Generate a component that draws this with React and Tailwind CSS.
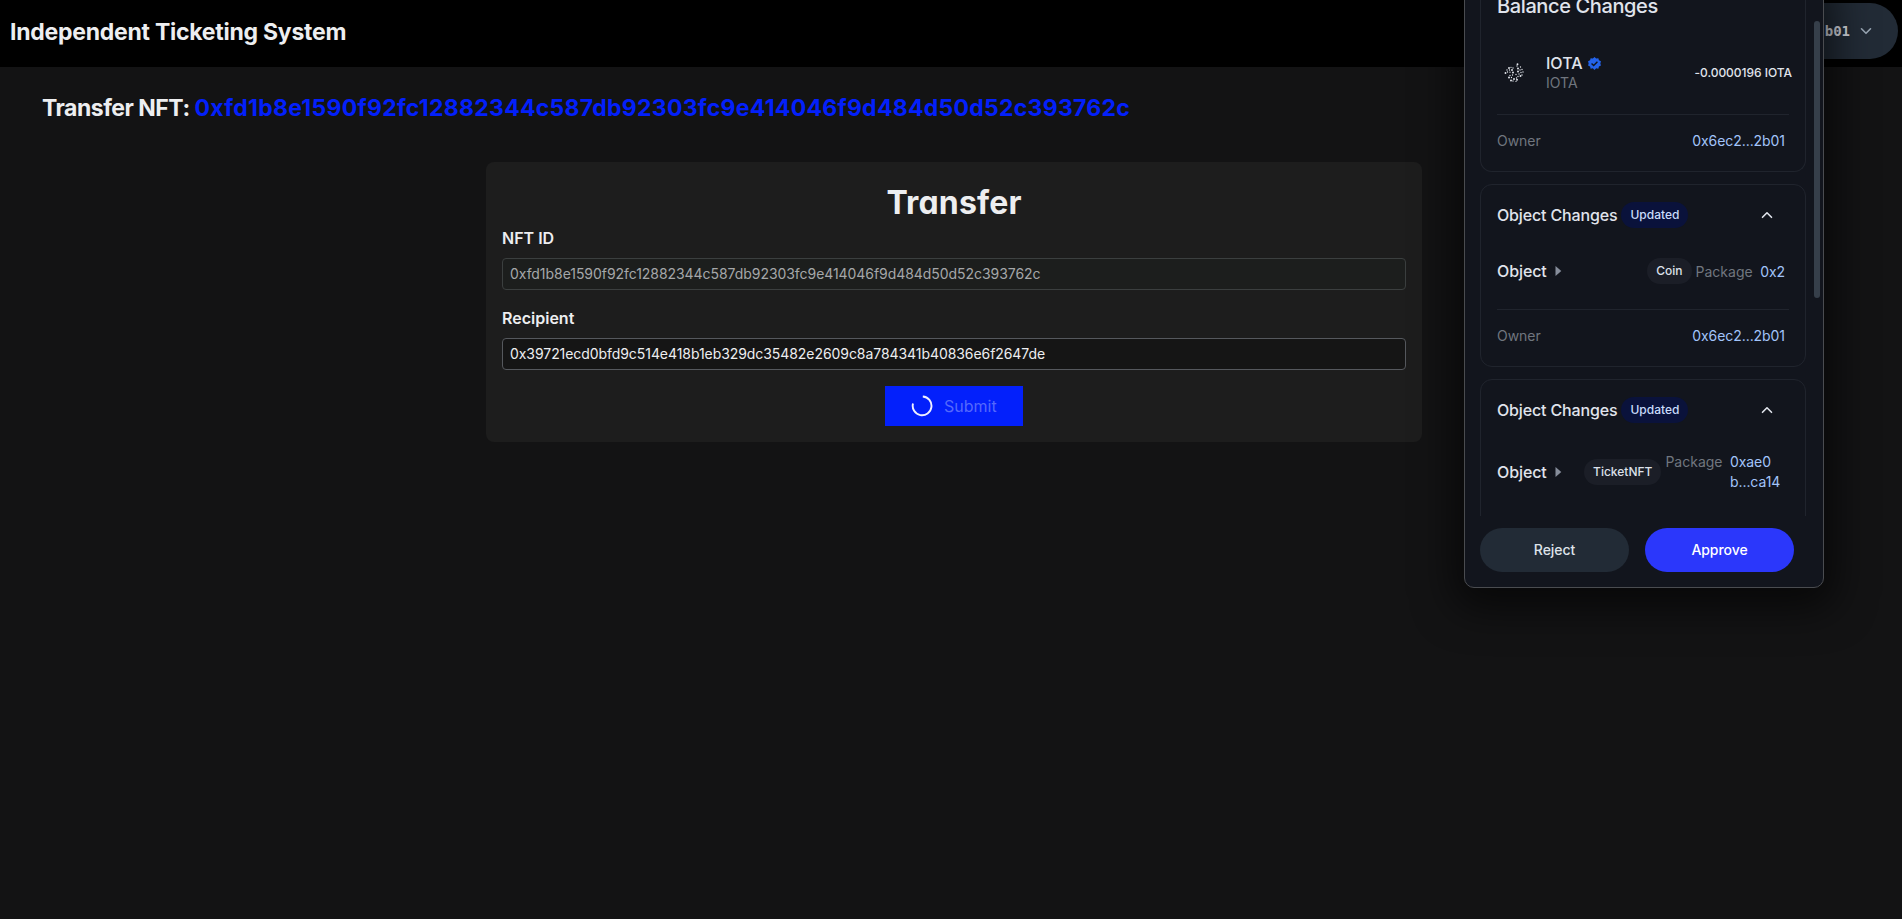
import React from "react";

const DOTS = [
  [13.5, 1.2], [13, 3], [16.5, 4], [5, 5], [7, 4.3], [9, 5], [14, 5.5], [3, 7], [5.5, 7], [8, 7], [16, 7], [18, 6.5],
  [1.5, 10], [3.5, 9], [6, 9.2], [14, 8.5], [17, 9.5], [19, 9], [9, 9.5], [12, 11.5], [15, 11], [16.5, 13], [18, 12],
  [6, 12.5], [5, 14.5], [7.5, 14.5], [8.5, 12], [10, 16], [12.5, 15], [14, 13.5], [7, 17.5], [9, 18], [12, 18.3], [13, 16.8],
];

function IotaLogo() {
  return (
    <svg className="size-5" viewBox="0 0 20 20" fill="#e6e9ef">
      {DOTS.map(([x, y], i) => (
        <circle key={i} cx={x} cy={y} r={i % 3 === 0 ? 0.95 : 0.65} />
      ))}
    </svg>
  );
}

function Verified() {
  return (
    <svg className="size-[13px]" viewBox="0 0 24 24">
      <path
        fill="#2463eb"
        d="M12 0l3.1 2.7 4-.6 1.1 3.9 3.7 1.7-1.1 4.1 1.1 4-3.7 1.7-1.1 4-4-.6L12 24l-3.1-3.1-4 .6-1.1-4L.1 15.800l1.100-4L.1 7.700 3.800 6l1.100-3.900 4 .6z"
      />
      <path d="M6.500 12.200l3.900 3.700 7-7.200" fill="none" stroke="#12151d" strokeWidth="2.600" />
    </svg>
  );
}

function Chevron({ className, up }) {
  return (
    <svg className={className} viewBox="0 0 12 8" fill="none" stroke="currentColor" strokeWidth="1.600" strokeLinecap="round" strokeLinejoin="round">
      <path d={up ? "M1.500 6.300L6 1.800l4.500 4.500" : "M1.500 1.800L6 6.300l4.500-4.500"} />
    </svg>
  );
}

function OwnerRow() {
  return (
    <div className="mx-4 flex h-[57px] items-center justify-between border-t border-[#20242d] pr-1 pb-[5px]">
      <span className="text-[14px] tracking-[-0.03px] text-[#70767f]">Owner</span>
      <span className="text-[14px] tracking-[-0.06px] text-[#a2c4fa]">0x6ec2...2b01</span>
    </div>
  );
}

function ChangesHeader() {
  return (
    <div className="flex h-[60px] items-center pl-4">
      <span className="text-[16px] font-medium tracking-[-0.15px] text-[#e0e4ec]">Object Changes</span>
      <span className="ml-1 flex h-[26px] items-center rounded-full bg-[#0a123b] px-[9px] text-[12px] font-medium text-[#c9dcfc]">
        Updated
      </span>
      <Chevron up className="mr-[32px] ml-auto h-2 w-3 text-[#e0e4ec]" />
    </div>
  );
}

function ObjectLabel() {
  return (
    <>
      <span className="text-[16px] font-medium tracking-[-0.1px] text-[#e0e4ec]">Object</span>
      <svg className="ml-2 h-[10px] w-[7px]" viewBox="0 0 7 10" fill="#868d9b">
        <path d="M.5 0L6.300 5 .5 10z" />
      </svg>
    </>
  );
}

function Badge({ children }) {
  return (
    <span className="ml-auto flex h-[26px] items-center rounded-full bg-[#1b1e27] px-[9px] text-[12px] font-medium text-[#dde1ea]">
      {children}
    </span>
  );
}

function WalletPopup() {
  return (
    <div className="absolute top-[-21px] left-[1464px] flex h-[609px] w-[360px] flex-col overflow-hidden rounded-[10px] border border-[#4a4c50] bg-[#12151d] shadow-[0_10px_40px_10px_rgba(0,0,0,0.6)]">
      <div className="flex h-[536px] gap-2 overflow-hidden pl-[15px]">
        <div className="flex w-[326px] shrink-0 flex-col gap-3">
          <section className="h-[192px] shrink-0 rounded-b-xl border border-t-0 border-[#20242d]">
            <h3 className="h-[56px] pt-[10px] pl-4 text-[20px] leading-8 font-medium tracking-[-0.38px] text-[#e0e4ec]">Balance Changes</h3>
            <div className="flex h-[78px] items-center pr-[13px] pb-1 pl-[23px]">
              <IotaLogo />
              <div className="ml-[21px] pl-px">
                <div className="flex items-center gap-[5px]">
                  <span className="text-[16px] leading-5 font-medium text-[#e0e4ec]">IOTA</span>
                  <Verified />
                </div>
                <div className="text-[14px] leading-5 text-[#70767f]">IOTA</div>
              </div>
              <span className="ml-auto text-[12px] font-medium tracking-[-0.03px] text-[#e0e4ec]">-0.0000196 IOTA</span>
            </div>
            <OwnerRow />
          </section>
          <section className="h-[183px] shrink-0 rounded-xl border border-[#20242d]">
            <ChangesHeader />
            <div className="flex h-[64px] items-center pr-[20px] pb-3 pl-4">
              <ObjectLabel />
              <Badge>Coin</Badge>
              <span className="ml-1 text-[14px] text-[#70767f]">Package</span>
              <span className="ml-[7.500px] text-[14px] tracking-[-0.05px] text-[#a2c4fa]">0x2</span>
            </div>
            <OwnerRow />
          </section>
          <section className="h-[183px] shrink-0 rounded-xl border border-[#20242d]">
            <ChangesHeader />
            <div className="flex h-[64px] items-center pr-[20px] pl-4">
              <ObjectLabel />
              <Badge>TicketNFT</Badge>
              <div className="ml-1 flex">
                <span className="text-[14px] leading-5 text-[#70767f]">Package</span>
                <span className="ml-[7.500px] w-[55px] text-[14px] leading-5 tracking-[-0.08px] text-[#a2c4fa]">0xae0<br />b...ca14</span>
              </div>
            </div>
          </section>
        </div>
        <div className="mt-[41px] h-[277px] w-[6px] shrink-0 rounded-full bg-[#363f4a]" />
      </div>
      <div className="flex gap-4 pt-3 pl-[15px]">
        <button className="h-11 w-[149px] rounded-full bg-[#222b36] pb-px text-[14px] font-medium tracking-[-0.05px] text-[#dfe3ea]">Reject</button>
        <button className="h-11 w-[149px] rounded-full bg-[#2b37fb] pb-px text-[14px] font-medium tracking-[-0.05px] text-white">Approve</button>
      </div>
    </div>
  );
}

export default function App() {
  return (
    <div className="relative h-[919px] w-full overflow-hidden bg-[#131314] font-['Inter','Liberation_Sans',sans-serif] text-[#edeef0]">
      <header className="flex h-[67px] justify-between bg-black pt-[3px] pr-1 pl-[10px]">
        <h1 className="mt-[13px] text-[23px] leading-8 font-bold tracking-[-0.25px]">Independent Ticketing System</h1>
        <div className="flex h-14 w-[170px] items-center justify-end rounded-full bg-[#222b36] pr-[26px] font-['DejaVu_Sans_Mono','Liberation_Mono',monospace]">
          <span className="text-[14px] font-bold text-[#d2d6de]">2b01</span>
          <Chevron className="ml-[10px] h-2 w-3 text-[#9aa7b5]" />
        </div>
      </header>
      <main>
        <h2 className="pt-[25px] pl-[42px] text-[23px] leading-8 font-bold">
          <span className="tracking-[-0.5px]">Transfer NFT: </span>
          <span className="tracking-[0.270px] text-[#0320fb]">0xfd1b8e1590f92fc12882344c587db92303fc9e414046f9d484d50d52c393762c</span>
        </h2>
        <form className="mt-[38px] ml-[486px] flex h-[280px] w-[936px] flex-col rounded-lg bg-[#1d1d1d] px-4 pt-[21px]">
          <h3 className="text-center text-[32px] leading-[40px] font-bold tracking-[0.150px] [font-feature-settings:'cv11']">Transfer</h3>
          <label className="mt-[3px] text-[16px] leading-6 font-semibold">NFT ID</label>
          <div className="mt-2 flex h-8 items-center rounded border border-[#3b3f3f] bg-[#1c1e1d] px-[7px] pb-px text-[14px] tracking-[-0.055px] text-[#a5a7a9]">
            0xfd1b8e1590f92fc12882344c587db92303fc9e414046f9d484d50d52c393762c
          </div>
          <label className="mt-4 text-[16px] leading-6 font-semibold">Recipient</label>
          <div className="mt-2 flex h-8 items-center rounded border border-[#55585d] bg-[#151515] px-[7px] pb-px text-[14px] tracking-[-0.065px]">
            0x39721ecd0bfd9c514e418b1eb329dc35482e2609c8a784341b40836e6f2647de
          </div>
          <button type="button" className="mt-4 flex h-10 w-[138px] items-center self-center bg-[#0320fb] pl-[26px]">
            <svg className="size-[22px]" viewBox="0 0 22 22" fill="none" stroke="#f0f1ff" strokeWidth="1.900">
              <path d="M11.800 1.500A9.400 9.400 0 1 1 2 8.500" />
            </svg>
            <span className="ml-[11px] text-[16px] text-[#5468fc]">Submit</span>
          </button>
        </form>
      </main>
      <WalletPopup />
    </div>
  );
}
